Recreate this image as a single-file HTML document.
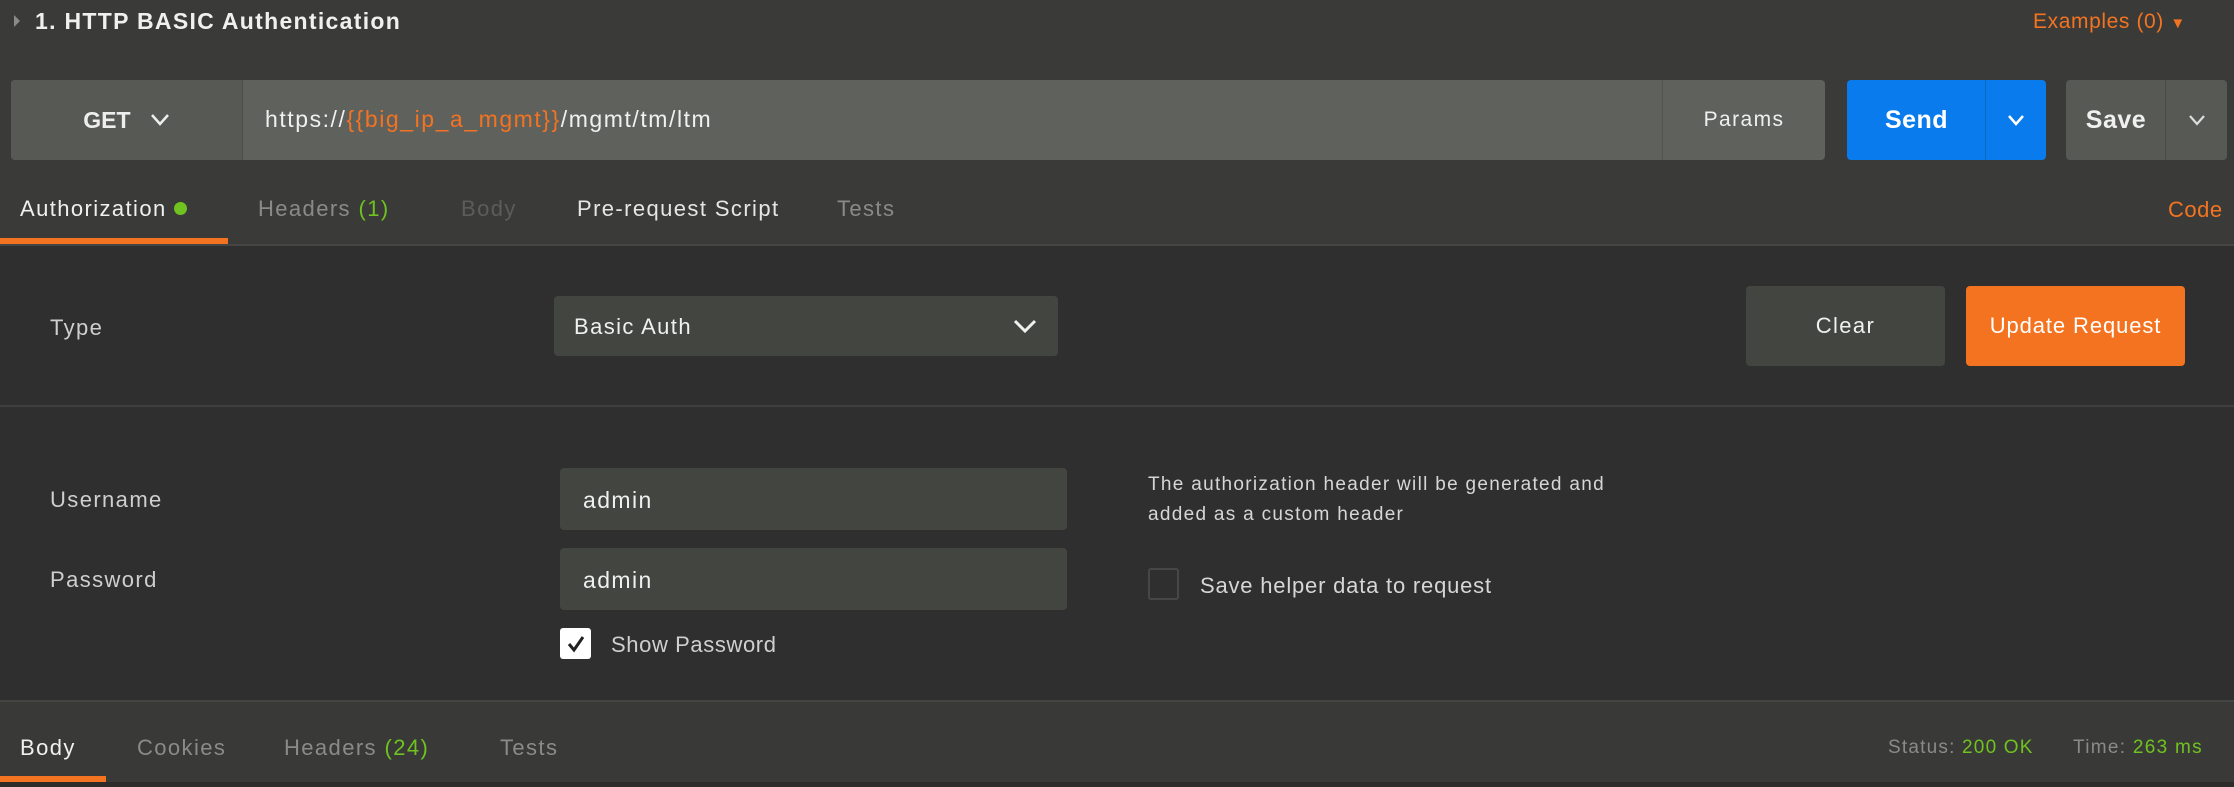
<!DOCTYPE html>
<html><head><meta charset="utf-8"><style>
*{margin:0;padding:0;box-sizing:border-box}
body{width:2234px;height:787px;background:#2f2f2f;font-family:"Liberation Sans",Arial,sans-serif;color:#e6e6e6;position:relative;overflow:hidden;letter-spacing:1.4px}
.a{position:absolute;white-space:nowrap}
.c{display:flex;align-items:center;justify-content:center}
.or{color:#f47321}.gr{color:#6fc21f}
</style></head><body>
<div class="a" style="left:0;top:0;width:2234px;height:246px;background:#3a3b38"></div>
<div class="a" style="left:0;top:244px;width:2234px;height:2px;background:#454643"></div>
<!-- title -->
<div class="a" style="left:14px;top:15px;width:0;height:0;border-left:6px solid #8a8b88;border-top:6px solid transparent;border-bottom:6px solid transparent"></div>
<div class="a" style="left:35px;top:6px;font-size:23px;font-weight:bold;color:#f0f0f0;line-height:30px;letter-spacing:1.3px">1. HTTP BASIC Authentication</div>
<div class="a or" style="left:2033px;top:7px;font-size:21px;line-height:30px;letter-spacing:0.6px">Examples (0) <span style="font-size:15px">▼</span></div>
<!-- url bar -->
<div class="a" style="left:11px;top:80px;width:1814px;height:80px;background:#5f615d;border-radius:4px"></div>
<div class="a c" style="left:11px;top:80px;width:231px;height:80px;background:#575955;border-radius:4px 0 0 4px;font-size:23px;font-weight:bold;color:#eee;letter-spacing:0">GET&nbsp;&nbsp;&nbsp;<svg width="20" height="14" viewBox="0 0 20 14"><path d="M2 2l8 9 8-9" stroke="#eee" stroke-width="2.5" fill="none"/></svg></div>
<div class="a" style="left:242px;top:80px;width:1px;height:80px;background:#4d4f4b"></div>
<div class="a" style="left:265px;top:104px;font-size:23px;line-height:30px;color:#f0f0f0;letter-spacing:1.55px">https://<span class="or">{{big_ip_a_mgmt}}</span>/mgmt/tm/ltm</div>
<div class="a" style="left:1662px;top:80px;width:1px;height:80px;background:#525450"></div>
<div class="a c" style="left:1663px;top:80px;width:162px;height:80px;font-size:21px;color:#f0f0f0">Params</div>
<div class="a" style="left:1847px;top:80px;width:199px;height:80px;background:#097bed;border-radius:4px"></div>
<div class="a c" style="left:1847px;top:80px;width:139px;height:80px;font-size:25px;font-weight:bold;color:#fff;letter-spacing:0.5px">Send</div>
<div class="a" style="left:1985px;top:80px;width:1px;height:80px;background:#0a68c6"></div>
<div class="a c" style="left:1986px;top:80px;width:60px;height:80px"><svg width="18" height="12" viewBox="0 0 18 12"><path d="M2 2l7 8 7-8" stroke="#fff" stroke-width="2.5" fill="none"/></svg></div>
<div class="a" style="left:2066px;top:80px;width:161px;height:80px;background:#575955;border-radius:4px"></div>
<div class="a c" style="left:2066px;top:80px;width:100px;height:80px;font-size:25px;font-weight:bold;color:#f0f0f0;letter-spacing:0.5px">Save</div>
<div class="a" style="left:2165px;top:80px;width:1px;height:80px;background:#4a4c48"></div>
<div class="a c" style="left:2166px;top:80px;width:61px;height:80px"><svg width="18" height="12" viewBox="0 0 18 12"><path d="M2 2l7 8 7-8" stroke="#ddd" stroke-width="2.2" fill="none"/></svg></div>
<!-- tabs -->
<div class="a" style="left:20px;top:195px;font-size:22px;line-height:28px;color:#f0f0f0">Authorization <span style="display:inline-block;width:13px;height:13px;border-radius:50%;background:#6fc21f;vertical-align:1px"></span></div>
<div class="a" style="left:258px;top:195px;font-size:22px;line-height:28px;color:#8a8b88">Headers <span class="gr">(1)</span></div>
<div class="a" style="left:461px;top:195px;font-size:22px;line-height:28px;color:#5c5d5a">Body</div>
<div class="a" style="left:577px;top:195px;font-size:22px;line-height:28px;color:#e6e6e6">Pre-request Script</div>
<div class="a" style="left:837px;top:195px;font-size:22px;line-height:28px;color:#8a8b88">Tests</div>
<div class="a or" style="left:2168px;top:196px;font-size:22px;line-height:28px;letter-spacing:0.5px">Code</div>
<div class="a" style="left:0;top:238px;width:228px;height:6px;background:#f47321"></div>
<!-- type row -->
<div class="a" style="left:50px;top:314px;font-size:22px;line-height:28px;color:#cfcfcf">Type</div>
<div class="a" style="left:554px;top:296px;width:504px;height:60px;background:#434541;border-radius:4px"></div>
<div class="a" style="left:574px;top:313px;font-size:22px;line-height:28px;color:#f0f0f0">Basic Auth</div>
<svg class="a" style="left:1012px;top:318px" width="26" height="16" viewBox="0 0 26 16"><path d="M3 3l10 10 10-10" stroke="#f0f0f0" stroke-width="3" fill="none"/></svg>
<div class="a c" style="left:1746px;top:286px;width:199px;height:80px;background:#434541;border-radius:4px;font-size:22px;color:#f0f0f0">Clear</div>
<div class="a c" style="left:1966px;top:286px;width:219px;height:80px;background:#f47321;border-radius:4px;font-size:22px;color:#fff;letter-spacing:0.9px">Update Request</div>
<div class="a" style="left:0;top:405px;width:2234px;height:2px;background:#3f403e"></div>
<!-- creds -->
<div class="a" style="left:50px;top:486px;font-size:22px;line-height:28px;color:#cfcfcf">Username</div>
<div class="a" style="left:560px;top:468px;width:507px;height:62px;background:#434541;border-radius:4px"></div>
<div class="a" style="left:583px;top:486px;font-size:23px;line-height:28px;color:#f0f0f0">admin</div>
<div class="a" style="left:50px;top:566px;font-size:22px;line-height:28px;color:#cfcfcf">Password</div>
<div class="a" style="left:560px;top:548px;width:507px;height:62px;background:#434541;border-radius:4px"></div>
<div class="a" style="left:583px;top:566px;font-size:23px;line-height:28px;color:#f0f0f0">admin</div>
<div class="a c" style="left:560px;top:628px;width:31px;height:31px;background:#fff;border-radius:3px"><svg width="20" height="18" viewBox="0 0 20 18"><path d="M3 9l5 6 9-13" stroke="#222" stroke-width="3" fill="none"/></svg></div>
<div class="a" style="left:611px;top:631px;font-size:22px;line-height:28px;color:#cfcfcf;letter-spacing:0.6px">Show Password</div>
<div class="a" style="left:1148px;top:470px;font-size:19px;line-height:30px;color:#d6d6d6;letter-spacing:1.3px">The authorization header will be generated and<br>added as a custom header</div>
<div class="a" style="left:1148px;top:568px;width:31px;height:32px;border:2px solid #474846;border-radius:3px"></div>
<div class="a" style="left:1200px;top:572px;font-size:22px;line-height:28px;color:#d6d6d6;letter-spacing:0.8px">Save helper data to request</div>
<!-- bottom -->
<div class="a" style="left:0;top:700px;width:2234px;height:87px;background:#393a37;border-top:2px solid #434643"></div>
<div class="a" style="left:20px;top:734px;font-size:22px;line-height:28px;color:#f0f0f0">Body</div>
<div class="a" style="left:137px;top:734px;font-size:22px;line-height:28px;color:#8a8b88">Cookies</div>
<div class="a" style="left:284px;top:734px;font-size:22px;line-height:28px;color:#8a8b88">Headers <span class="gr">(24)</span></div>
<div class="a" style="left:500px;top:734px;font-size:22px;line-height:28px;color:#8a8b88">Tests</div>
<div class="a" style="left:0;top:776px;width:106px;height:6px;background:#f47321"></div>
<div class="a" style="left:0;top:782px;width:2234px;height:5px;background:#2c2d2b"></div>
<div class="a" style="left:1888px;top:734px;font-size:19px;line-height:28px;color:#8a8b88;letter-spacing:1.2px">Status: <span class="gr">200 OK</span></div>
<div class="a" style="left:2073px;top:734px;font-size:19px;line-height:28px;color:#8a8b88;letter-spacing:1.3px">Time: <span class="gr">263 ms</span></div>
</body></html>
